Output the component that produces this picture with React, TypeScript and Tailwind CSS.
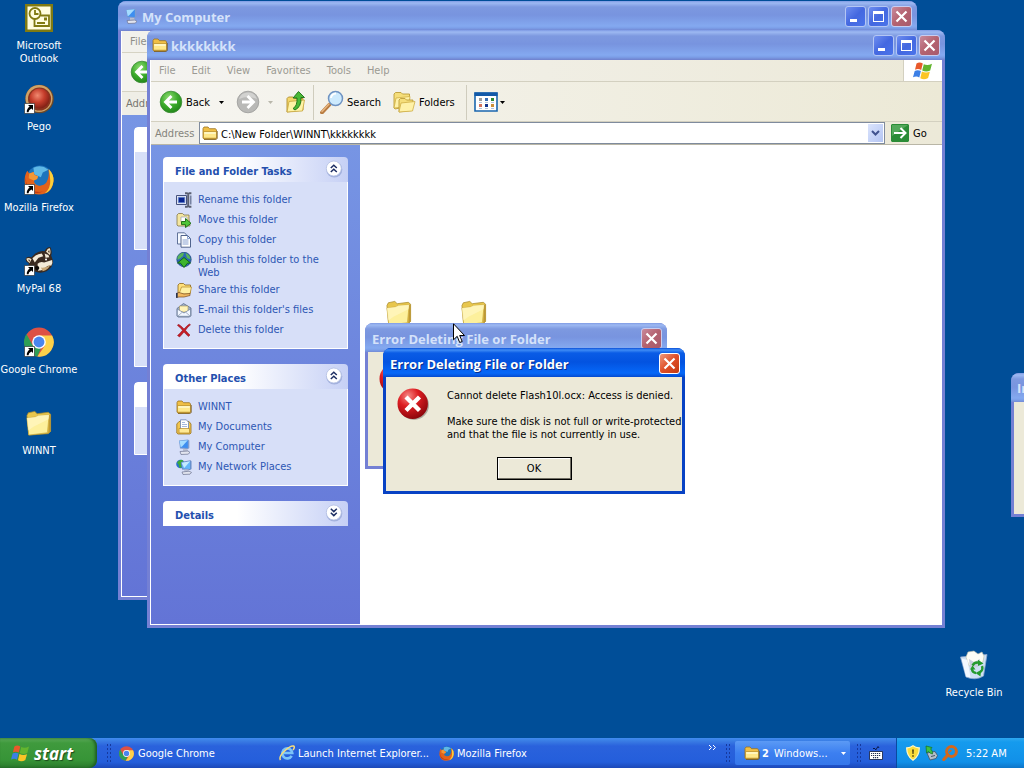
import type { ReactNode } from 'react'

/* ---------- Icons ---------- */

function FolderIcon({ className = 'size-4' }: { className?: string }) {
  return (
    <svg viewBox="0 0 16 16" className={className} aria-hidden="true">
      <path d="M1 13V3.500L2 2h4l1.500 1.700h6L14.500 5v8l-1 1.200H2z" fill="#f0bf45" stroke="#9a7220" strokeWidth=".8" />
      <path d="M1.500 13.200V6.500h13v6.700z" fill="#ffe88a" stroke="#b58a26" strokeWidth=".7" />
      <path d="M2.300 7.300h11.400v1.400H2.300z" fill="#fffbd5" />
      <path d="M2 14.300h12.500l.8-1V6" fill="none" stroke="#6d4c0c" strokeWidth=".7" />
    </svg>
  )
}

function BigFolderIcon({ className = 'size-[26px]' }: { className?: string }) {
  return (
    <svg viewBox="0 0 28 28" className={className} aria-hidden="true">
      <path d="M1 6l1.500-3 7-1.500L12 4l12-1.500 2.500 2V23L24 25.500 3 27z" fill="#e8c64c" stroke="#a88b2e" strokeWidth=".8" />
      <path d="M1 8.500l9-1L13.500 6 25 5l-2 19.500L3 27z" fill="#fdf09c" stroke="#c9a93c" strokeWidth=".7" />
      <path d="M10 7.500L13.500 6 25 5l-.8 5L8 18 2.500 22 1 8.500z" fill="#fff7c4" opacity=".7" />
      <path d="M25 5l1.500 0V23L24 25.500z" fill="#bd9835" />
    </svg>
  )
}

function ComputerIcon({ className = 'size-4' }: { className?: string }) {
  return (
    <svg viewBox="0 0 16 16" className={className} aria-hidden="true">
      <path d="M3 1.500L12 .6l1.300 1V9l-1.500 1.200L4 9.500z" fill="#7d9cd0" />
      <path d="M3.500 2l8.300-.7V9L4.600 8.500z" fill="#3d8ef0" />
      <path d="M3.500 2l8.300-.7-6 6.500-1.200.3z" fill="#a5dcff" />
      <path d="M7 9.800l4 .2 1.500 2.500-5.500.5z" fill="#b9bfd2" />
      <path d="M4 12.500l8-.5 2 1.500-2 1.700-7 .3z" fill="#e2e5ef" stroke="#6b7391" strokeWidth=".7" />
    </svg>
  )
}

function NetworkIcon() {
  return (
    <svg viewBox="0 0 16 16" className="size-4" aria-hidden="true">
      <circle cx="4.500" cy="5" r="4.300" fill="#2b6fd0" />
      <path d="M1 3.500Q4.500-1 7.500 2L5 5 6 8 3.500 9 2.500 5.500z" fill="#3cab3a" />
      <path d="M5 3L14.500 1.200l1 1V10l-1.500 1-8-.5z" fill="#6788c4" />
      <path d="M5.700 3.700l8.500-1.500V10L6.700 9.500z" fill="#63b6fa" />
      <path d="M5.700 3.700l8.500-1.500-6 6.800z" fill="#c3ebff" />
      <path d="M8.500 10.500h4l.5 2H8z" fill="#b9bfd2" />
      <path d="M6 13l7-.8 2.500 1.200-1.500 1.800-7 .3z" fill="#e2e5ef" stroke="#6b7391" strokeWidth=".7" />
    </svg>
  )
}

function DocumentsIcon() {
  return (
    <svg viewBox="0 0 16 16" className="size-4" aria-hidden="true">
      <path d="M.8 14V5L3 2.500h10L15 5v9l-1 1H2z" fill="#f2c650" stroke="#96701b" strokeWidth=".8" />
      <path d="M4.500.8h5.800l2.200 2.400V11h-8z" fill="#fff" stroke="#6881b4" strokeWidth=".8" />
      <path d="M6 3.500h3M6 5.500h5M6 7.500h5" stroke="#8ba6d6" strokeWidth=".8" />
      <path d="M3 9.500h10.500V14H3z" fill="#ffe994" stroke="#b38725" strokeWidth=".7" />
    </svg>
  )
}

function RenameIcon() {
  return (
    <svg viewBox="0 0 16 16" className="size-4" aria-hidden="true">
      <path d="M.5 3.500h10v9H.5z" fill="#e6e9f5" stroke="#46527e" strokeWidth="1" />
      <path d="M2.300 5.300h6.500v5.400H2.300z" fill="#0a2590" stroke="#6f92da" strokeWidth=".7" />
      <path d="M9 1.200h2L12.200 2l1.200-.8h2M12.200 2v12M9 14.800h2l1.200-.8 1.200.8h2" fill="none" stroke="#5a5f70" strokeWidth="2" />
      <path d="M14.700 3.500v9" stroke="#7681a0" strokeWidth="1.600" />
    </svg>
  )
}

function MoveIcon() {
  return (
    <svg viewBox="0 0 16 16" className="size-4" aria-hidden="true">
      <path d="M1 13V3l1.500-1.500h4L8 3h5v4l1 7H2z" fill="#f4e6a0" stroke="#837648" strokeWidth=".8" />
      <path d="M5 5h6v5H5z" fill="#fff" stroke="#8b93a8" strokeWidth=".6" />
      <path d="M5.500 9.500h4V6.500l5.500 4.800-5.500 4.300v-3h-4z" fill="#4fc537" stroke="#18690f" strokeWidth=".9" />
    </svg>
  )
}

function CopyIcon() {
  return (
    <svg viewBox="0 0 16 16" className="size-4" aria-hidden="true">
      <path d="M1.500.8h7L11 3.500V12H1.500z" fill="#f4f8ff" stroke="#51658f" strokeWidth=".9" />
      <path d="M5 3.500h6.500L14.500 6.500v8.700H5z" fill="#fff" stroke="#3f5380" strokeWidth=".9" />
      <path d="M11.500 3.500v3h3M6.500 8h6M6.500 10h6M6.500 12h6" fill="none" stroke="#6a89c4" strokeWidth=".8" />
    </svg>
  )
}

function PublishIcon() {
  return (
    <svg viewBox="0 0 16 16" className="size-4" aria-hidden="true">
      <circle cx="8" cy="7.500" r="7.200" fill="#2a68b4" stroke="#173f78" strokeWidth=".7" />
      <path d="M1.500 5Q4 .8 8 .8L7 4 4 6.500 1.500 8zM9.500 1Q14 2.500 14.800 7.500L11 6z" fill="#58b55a" />
      <path d="M8 5.500l6.500 5.500-3 .2L8 15.500 4.500 11.200 1.500 11z" fill="#3fb52d" stroke="#0f6011" strokeWidth=".9" />
    </svg>
  )
}

function ShareIcon() {
  return (
    <svg viewBox="0 0 16 16" className="size-4" aria-hidden="true">
      <path d="M2 11V3l1.500-1.500h4L9 3h5.500v8z" fill="#ffe07b" stroke="#8b6518" strokeWidth=".8" />
      <path d="M3 12l2.500-7H15.500L14 12z" fill="#fff0a2" stroke="#b28728" strokeWidth=".7" />
      <path d="M0 11.500l3-1 5 1.500 6-.5v2l-6 1.500H3L0 15.500z" fill="#f1b860" stroke="#7a4a20" strokeWidth=".7" />
      <path d="M0 11h1.700v4.800H0z" fill="#27314f" />
    </svg>
  )
}

function MailIcon() {
  return (
    <svg viewBox="0 0 16 16" className="size-4" aria-hidden="true">
      <path d="M1 6.500L7.500 1.500 15 6v7.500L13.500 15H2L1 14z" fill="#9fb0c9" stroke="#5c6b86" strokeWidth=".8" />
      <path d="M3.500 4h8.500v6h-8.500z" fill="#fff3b8" stroke="#a4945c" strokeWidth=".6" />
      <path d="M1.300 7L8 11l6.500-4v7.300H1.300z" fill="#f2f7ff" stroke="#6f7f9c" strokeWidth=".7" />
      <path d="M1.500 14.300L6.500 10M14.300 14.300L9.500 10" stroke="#8795b0" strokeWidth=".7" />
    </svg>
  )
}

function DeleteIcon() {
  return (
    <svg viewBox="0 0 16 16" className="size-4" aria-hidden="true">
      <path d="M2 2.500Q3.500 2 8 7q4-4.500 5.500-5l1 .8Q11 5.500 9.500 8.300q2.500 3.200 4.500 4.700l-1.500 1.500Q10 12.500 8 10q-2 2.500-4.500 5L1.500 13.500Q4.500 11 6.500 8.300 4 5 1.500 3.500z" fill="#c51d26" stroke="#8b0d18" strokeWidth=".5" />
    </svg>
  )
}

function FlagIcon({ className }: { className: string }) {
  return (
    <svg viewBox="0 0 20 18" className={className} aria-hidden="true">
      <path d="M3.500 1.500Q6.500-.5 9.800 1.500L8.200 8Q5 6.200 2 7.800z" fill="#e8592b" />
      <path d="M10.800 2.200Q14.500 4 19 1.700L17.200 8.500Q13.300 10.300 9.200 8.500z" fill="#63b52f" />
      <path d="M1.700 8.900Q5 7.300 7.900 9.100L6.300 15.500Q3.500 13.700 0 15.300z" fill="#3c80e6" />
      <path d="M8.900 9.600Q13 11.400 16.900 9.700L15.100 16Q11 18.400 7.300 16.200z" fill="#fbc526" />
    </svg>
  )
}

function BackIcon() {
  return (
    <svg viewBox="0 0 24 24" className="size-6 shrink-0" aria-hidden="true">
      <defs>
        <radialGradient id="backFill" cx=".4" cy=".3" r=".8">
          <stop offset="0" stopColor="#8fdc72" />
          <stop offset=".5" stopColor="#3cab2c" />
          <stop offset="1" stopColor="#1c7d16" />
        </radialGradient>
      </defs>
      <circle cx="12" cy="12" r="10.800" fill="url(#backFill)" stroke="#3b8a35" strokeWidth=".8" />
      <path d="M12.500 6L6.500 12l6 6M7 12h11" fill="none" stroke="#fff" strokeWidth="2.800" />
    </svg>
  )
}

function ForwardIcon() {
  return (
    <svg viewBox="0 0 24 24" className="size-6 shrink-0" aria-hidden="true">
      <circle cx="12" cy="12" r="10.800" fill="#b9b9b7" stroke="#9c9c9a" strokeWidth=".8" />
      <path d="M3 9a9.500 9.500 0 0 1 18 0Q12 5 3 9z" fill="#d2d2d0" />
      <path d="M11.500 6l6 6-6 6M17 12H6" fill="none" stroke="#fff" strokeWidth="2.800" />
    </svg>
  )
}

function UpIcon() {
  return (
    <svg viewBox="0 0 22 24" className="h-6 w-[22px]" aria-hidden="true">
      <path d="M2 22V8.500L3.500 7H8l1.500 1.500H18V20z" fill="#f5d76b" stroke="#b08e2d" strokeWidth=".9" />
      <path d="M2 22L4 11.500 19.500 10 17.500 21z" fill="#fff3a6" stroke="#c6a53d" strokeWidth=".8" />
      <path d="M8 18.500Q12.500 16 12 8H8L13.500 1.500 19.500 7.500H16Q16.500 17 10 20z" fill="#4ab936" stroke="#1b6e14" strokeWidth=".9" />
    </svg>
  )
}

function SearchIcon() {
  return (
    <svg viewBox="0 0 24 24" className="size-6" aria-hidden="true">
      <path d="M2 22.500l7.500-8" stroke="#b87c42" strokeWidth="3.800" strokeLinecap="round" />
      <path d="M2 21.500l7-7.500" stroke="#e8b680" strokeWidth="1.400" strokeLinecap="round" />
      <circle cx="15.500" cy="8.500" r="7" fill="#cdeafd" stroke="#6f93c2" strokeWidth="1.500" />
      <path d="M11 8a5 5 0 0 1 5-4.500" fill="none" stroke="#fff" strokeWidth="2" />
    </svg>
  )
}

function FoldersIcon() {
  return (
    <svg viewBox="0 0 24 24" className="size-6" aria-hidden="true">
      <path d="M2 18V4l1.500-1.500H9L10.500 4h7v12L3 19z" fill="#f5de7a" stroke="#bb9c38" strokeWidth=".9" />
      <path d="M2 18L4 8l14-1.500-1 10z" fill="#fff2a8" stroke="#cfae45" strokeWidth=".8" />
      <path d="M7 22V10l1.500-1.500h4.500L14.500 10H21l-1.500 10.500z" fill="#f5de7a" stroke="#bb9c38" strokeWidth=".9" />
      <path d="M7 22l2-9 14-1.500L20.500 21z" fill="#fff2a8" stroke="#cfae45" strokeWidth=".8" />
    </svg>
  )
}

function ViewsIcon() {
  return (
    <svg viewBox="0 0 24 20" className="h-5 w-6" aria-hidden="true">
      <path d="M1 1h22v18H1z" fill="#fff" stroke="#1a66ae" strokeWidth="1.600" />
      <path d="M.5.500h23v3.500H.500z" fill="#1259a8" />
      <path d="M5 6h3v3H5z" fill="#9c9c9c" />
      <path d="M11 6h3v3h-3z" fill="#3a6fb4" />
      <path d="M17 6h3v3h-3z" fill="#2e8834" />
      <path d="M5 12h3v3H5z" fill="#d3725c" />
      <path d="M11 12h3v3h-3z" fill="#14358e" />
      <path d="M17 12h3v3h-3z" fill="#cd9038" />
      <path d="M5 10.500h3M11 10.500h3M17 10.500h3M5 16.500h3M11 16.500h3M17 16.500h3" stroke="#9fb4d4" strokeWidth=".8" />
    </svg>
  )
}

function Caret({ className = 'fill-black' }: { className?: string }) {
  return (
    <svg viewBox="0 0 5 3" className={`h-[3px] w-[5px] ${className}`} aria-hidden="true">
      <path d="M0 0h5L2.500 3z" />
    </svg>
  )
}

function ErrorIcon() {
  return (
    <svg viewBox="0 0 32 32" className="size-8 shrink-0" aria-hidden="true">
      <defs>
        <radialGradient id="errorFill" cx=".35" cy=".25" r=".85">
          <stop offset="0" stopColor="#f58a86" />
          <stop offset=".4" stopColor="#dd1d22" />
          <stop offset="1" stopColor="#7f0207" />
        </radialGradient>
      </defs>
      <circle cx="17" cy="17" r="15" fill="#00000044" />
      <circle cx="15.700" cy="15.700" r="15.200" fill="url(#errorFill)" />
      <path d="M9 9l13.500 13.500M22.500 9L9 22.500" stroke="#fff" strokeWidth="4.400" />
    </svg>
  )
}

function ChromeIcon({ className }: { className: string }) {
  return (
    <svg viewBox="0 0 32 32" className={className} aria-hidden="true">
      <circle cx="16" cy="16" r="15.500" fill="#dd5144" />
      <path d="M2.600 7.400L9.400 19.600 18 23l-3.700 8.500A15.500 15.500 0 0 1 2.600 7.400z" fill="#2f9e55" />
      <path d="M30 9H16l6.500 10.500L14.300 31.500A15.500 15.500 0 0 0 30 9z" fill="#fcd14a" />
      <circle cx="16" cy="16" r="7.300" fill="#fff" />
      <circle cx="16" cy="16" r="5.800" fill="#4a85ee" />
    </svg>
  )
}

function FirefoxIcon({ className }: { className: string }) {
  return (
    <svg viewBox="0 0 32 32" className={className} aria-hidden="true">
      <circle cx="17" cy="14.500" r="14" fill="#1d74bd" />
      <path d="M10 3Q18-1 26 5L20 8l-2 5-7-3z" fill="#5fb8e6" />
      <path d="M26 4.500Q32 10 31.500 17 30 31 16 31.500 3 31 .8 19 0 11 3.500 6L5.500 9l5-1.500Q10 10 12 11l3 1-1 3-3.500 1.500Q11 21 16 22q5 .5 8-3.500 3.500-6 2-14z" fill="#e2621b" />
      <path d="M26.500 4.500Q32 10 31.500 17 30.500 27 22 30.500q6.500-6 6-13.500-.2-6-1.500-12.500z" fill="#fbd03a" />
      <path d="M2 12q-1 9 6 14 6 4 13 2-9 4.500-16-2Q.5 20 2 12z" fill="#c23a13" />
      <path d="M5.500 9L10.500 7.500Q10 10 12 11l3 1-1 3-3.500 1.500L5 14z" fill="#f39735" />
    </svg>
  )
}

function RaccoonIcon() {
  return (
    <svg viewBox="0 0 32 32" className="size-[30px]" aria-hidden="true">
      <path d="M1.500 14Q3 10.500 8 12l4-4q5-3.500 10-2.500Q24 1 28 1q2.500 4 1 9l2 6q0 7-7 11-7 3-13 0-7-3-6-9-3-1-3.500-4z" fill="#3a2a20" />
      <path d="M2.500 13.500Q5 12 8 14l-2 4q-3-1-3.500-4.500zM23.500 6Q25.500 2 27.500 2.500q1.500 3.500 0 7z" fill="#f1e3c6" />
      <path d="M4.500 14.500q1.500-.5 2 .8L5.500 17zM25.500 6q.8-1.500 1.500-1.500.5 1.500 0 3z" fill="#5a4233" />
      <path d="M9 13q5-5 10-5l1.500 3-5 1.500-4 5zM22 8l4 1.500 1 2.500-4 .5z" fill="#f3ead8" />
      <path d="M14.500 19q3-3 7-1.500l8.500-2.500q1 3-1 6-4-.5-6 2-3 3.500-8 3.500z" fill="#f3ead8" />
      <path d="M18 23q5 1 10-3-1.500 5-8 7z" fill="#c9a877" />
      <circle cx="23.500" cy="14.500" r="1.100" fill="#fff" />
      <circle cx="14" cy="23.500" r="2.300" fill="#0d0907" />
    </svg>
  )
}

function PegoIcon() {
  return (
    <svg viewBox="0 0 30 30" className="size-[30px]" aria-hidden="true">
      <defs>
        <radialGradient id="pegoFill" cx=".4" cy=".35" r=".7">
          <stop offset="0" stopColor="#f08a70" />
          <stop offset=".5" stopColor="#c63e2c" />
          <stop offset="1" stopColor="#7a1c12" />
        </radialGradient>
      </defs>
      <circle cx="15.500" cy="15" r="14.300" fill="#6d4828" />
      <circle cx="15" cy="14.500" r="13.500" fill="#d0a368" />
      <circle cx="15.500" cy="15" r="11.500" fill="#8a351f" />
      <circle cx="15.500" cy="14.500" r="10" fill="url(#pegoFill)" />
    </svg>
  )
}

function OutlookIcon() {
  return (
    <svg viewBox="0 0 28 28" className="size-7" aria-hidden="true">
      <path d="M0 0h28v28H0z" fill="#807a12" />
      <path d="M2.500 2.500h23v23h-23z" fill="#fffde0" />
      <g fill="none" stroke="#807a12" strokeWidth="1.800">
        <path d="M9.500 14v8h14.500V11.500H16" />
        <circle cx="10" cy="9.500" r="5.500" fill="#fffde0" />
        <path d="M10 6v4h3.500M12 19h8" />
      </g>
      <path d="M19 13.500h3v3h-3z" fill="#807a12" />
    </svg>
  )
}

function RecycleIcon() {
  return (
    <svg viewBox="0 0 30 30" className="size-[30px]" aria-hidden="true">
      <path d="M1.500 7L28 4.500 24.500 26q-8 5-17.500 1z" fill="#cfe0f3" stroke="#8fa9cf" strokeWidth=".8" />
      <path d="M7 7l2-5 6-1 4 3 4-2 2 4-1 6-14 4z" fill="#fdfdf6" stroke="#b8bda9" strokeWidth=".6" />
      <path d="M10 9l5 3 6-3-2 8-8 1z" fill="#c7cede" />
      <path d="M2.500 8.500l6 1.500 3 17.500-4.500-1z" fill="#f2f8ff" />
      <g fill="none" stroke="#259a2d" strokeWidth="2.400">
        <path d="M13.500 15.500q2.500-4 7-2.500M23 16q1.500 4.500-2.500 6.500M17 23q-4-.5-4-4.500" />
      </g>
      <path d="M19 9.800l5.500 3.700-5.500 2.500zM22 20l-5.500 3 5 3.500zM11 19.500l2.500-4 3 4z" fill="#259a2d" />
    </svg>
  )
}

function IeIcon() {
  return (
    <svg viewBox="0 0 16 16" className="size-4" aria-hidden="true">
      <path d="M12.700 10.800A5 5 0 1 1 13.300 8H4.500" fill="none" stroke="#7cc4f8" strokeWidth="2.600" />
      <path d="M1.500 15Q-.5 12 5 6.500 11.500.3 14.500 1q1.800 1-.5 4" fill="none" stroke="#f5dc7c" strokeWidth="1.500" />
    </svg>
  )
}

function ShortcutArrow() {
  return (
    <svg viewBox="0 0 11 11" className="absolute bottom-0 left-0 size-[11px]" aria-hidden="true">
      <path d="M.5.500h10v10H.500z" fill="#fff" stroke="#222" strokeWidth=".6" />
      <path d="M4 2h5v5L7.400 5.400Q4.500 7 4.500 9.300H2.800Q2.500 6 5.600 3.600z" fill="#000" />
    </svg>
  )
}

function KeyboardIcon() {
  return (
    <svg viewBox="0 0 14 14" className="size-[14px]" aria-hidden="true">
      <path d="M4 3q1-2 2 0t2-1 2 0" fill="none" stroke="#0a1b4c" strokeWidth="1" />
      <path d="M.5 5.500h13v8H.500z" fill="#fff" stroke="#101a3a" strokeWidth=".8" />
      <path d="M2 7.500h10M2 9.500h10M4 11.700h6" stroke="#23304f" strokeWidth="1.200" strokeDasharray="1.200 .8" />
    </svg>
  )
}

function ShieldIcon() {
  return (
    <svg viewBox="0 0 14 16" className="h-4 w-[14px]" aria-hidden="true">
      <path d="M7 .8Q10 3 13.300 2.800 13.500 11 7 15.300.5 11 .7 2.800 4 3 7 .8z" fill="#fbdc3a" stroke="#fff6c4" strokeWidth="1.200" />
      <path d="M6.200 4.500h1.600L7.500 9h-1zM6.300 10.200h1.400v1.500H6.300z" fill="#3a3108" />
    </svg>
  )
}

function DeviceIcon() {
  return (
    <svg viewBox="0 0 14 16" className="h-4 w-[14px]" aria-hidden="true">
      <path d="M3 8l8-1.500 2.500 4-1.500 3-6 1.500z" fill="#b5c0c8" stroke="#455364" strokeWidth=".8" />
      <path d="M7 11.500l4-1" stroke="#455364" strokeWidth="1" />
      <path d="M2 1l6 1.500-1.300 1.500Q9 6 8.500 9 6 8.500 4.500 6.500L2.500 8z" fill="#3fc143" stroke="#147020" strokeWidth=".7" />
    </svg>
  )
}

function TrayRingIcon() {
  return (
    <svg viewBox="0 0 16 16" className="size-4" aria-hidden="true">
      <circle cx="9.500" cy="6.500" r="4.900" fill="none" stroke="#d4681c" strokeWidth="3" />
      <path d="M1.800 14.500l4-4.500" stroke="#d4681c" strokeWidth="3.200" strokeLinecap="round" />
      <path d="M7 7.500l2.500-2.500" stroke="#d4681c" strokeWidth="1.500" />
    </svg>
  )
}

function Chevrons({ down = false }: { down?: boolean }) {
  return (
    <svg viewBox="0 0 18 18" className="mb-[2px] size-[18px]" aria-hidden="true">
      <circle cx="9.300" cy="9.500" r="8" fill="#7f91c9" opacity=".55" />
      <circle cx="8.800" cy="8.500" r="7.500" fill="#fff" stroke="#b3bfe2" strokeWidth=".8" />
      <path
        d={down ? 'M5.800 4.800l3 2.800 3-2.800M5.800 8.800l3 2.800 3-2.800' : 'M5.800 8l3-2.800L11.800 8M5.800 12l3-2.800 3 2.800'}
        fill="none"
        stroke="#1c2d62"
        strokeWidth="1.500"
      />
    </svg>
  )
}

/* ---------- Window parts ---------- */

const titleInactive =
  'bg-[linear-gradient(#7e9ae4_0px,#9db9f2_2px,#7d99e0_6px,#7894df_14px,#84a9f0_25px,#7c9fe8_27px,#6f80cc_30px)]'
const titleActive =
  'bg-[linear-gradient(#0a4fd8_0px,#3f8cf5_2px,#0a5ce6_5px,#0353e0_14px,#0668f8_25px,#055be6_27px,#0440c0_30px)]'
const titleFont = "pt-[2px] font-['Open_Sans','Noto_Sans',sans-serif] text-[13px] font-bold"

function CloseButton({ active = false }: { active?: boolean }) {
  return (
    <button
      type="button"
      aria-label="Close"
      className={`flex size-[21px] items-center justify-center rounded-[3px] border ${
        active ? 'border-white bg-[linear-gradient(135deg,#f0997c,#df4f28_50%,#c33a12)]' : 'border-[#c8cdf0] bg-[linear-gradient(135deg,#c98a9c,#b4626f_50%,#a85a6c)]'
      }`}
    >
      <svg viewBox="0 0 13 13" className="size-[13px]" aria-hidden="true">
        <path d="M1.500 1.500l10 10M11.500 1.500l-10 10" stroke="#fff" strokeWidth="2.200" />
      </svg>
    </button>
  )
}

function WindowButtons() {
  const btn =
    'flex size-[21px] rounded-[3px] border border-[#b4c6f4] bg-[linear-gradient(135deg,#6f8ff0,#4468e0_50%,#4a74ea)]'
  return (
    <div className="flex gap-[2px]">
      <button type="button" aria-label="Minimize" className={`${btn} items-end p-1`}>
        <span className="h-[3px] w-[7px] bg-white" />
      </button>
      <button type="button" aria-label="Maximize" className={`${btn} items-center justify-center`}>
        <span className="h-[11px] w-[11px] border border-t-3 border-white" />
      </button>
      <CloseButton />
    </div>
  )
}

interface ExplorerProps {
  title: string
  icon: ReactNode
  className: string
  children: ReactNode
}

function ExplorerFrame({ title, icon, className, children }: ExplorerProps) {
  return (
    <section className={`absolute flex flex-col overflow-hidden rounded-t-lg bg-[#7480d4] ${className}`}>
      <header className={`flex h-[30px] shrink-0 items-center gap-[3px] px-[5px] ${titleInactive}`}>
        {icon}
        <h2 className={`flex-1 text-[#d5e2fa] ${titleFont}`}>{title}</h2>
        <WindowButtons />
      </header>
      <div className="mx-[3px] mb-[3px] flex flex-1 flex-col border-b border-l border-white bg-[#efede0]">{children}</div>
    </section>
  )
}

interface Task {
  label: string
  icon: ReactNode
}

const folderTasks: Task[] = [
  { label: 'Rename this folder', icon: <RenameIcon /> },
  { label: 'Move this folder', icon: <MoveIcon /> },
  { label: 'Copy this folder', icon: <CopyIcon /> },
  { label: 'Publish this folder to the Web', icon: <PublishIcon /> },
  { label: 'Share this folder', icon: <ShareIcon /> },
  { label: "E-mail this folder's files", icon: <MailIcon /> },
  { label: 'Delete this folder', icon: <DeleteIcon /> },
]

const otherPlaces: Task[] = [
  { label: 'WINNT', icon: <FolderIcon /> },
  { label: 'My Documents', icon: <DocumentsIcon /> },
  { label: 'My Computer', icon: <ComputerIcon /> },
  { label: 'My Network Places', icon: <NetworkIcon /> },
]

function TaskPanel({ title, tasks }: { title: string; tasks?: Task[] }) {
  return (
    <section>
      <button
        type="button"
        className="flex h-[25px] w-full items-center justify-between rounded-t-[4px] bg-linear-to-r from-white from-40% to-[#c6d0f5] pr-[5px] pl-3 text-left font-bold text-[#2450ae]"
      >
        <span className="pt-[3px]">{title}</span>
        <Chevrons down={!tasks} />
      </button>
      {tasks && (
        <ul className="flex flex-col gap-1 border border-t-0 border-white bg-[#d7dff8] py-[10px] pr-6 pl-3">
          {tasks.map((task) => (
            <li key={task.label}>
              <a href="#" className="flex min-h-4 items-start gap-[6px] text-[#2d57b4]">
                <span className="shrink-0">{task.icon}</span>
                <span className="-mb-px pt-px">{task.label}</span>
              </a>
            </li>
          ))}
        </ul>
      )}
    </section>
  )
}

const sideFill = 'bg-linear-to-b from-[#7795e4] to-[#6374d6]'

function BackWindow() {
  return (
    <ExplorerFrame title="My Computer" icon={<ComputerIcon />} className="top-px right-[107px] bottom-[138px] left-[118px]">
      <div className="flex h-[22px] items-center border-b border-[#d6d3c4] bg-[#f2f1ec] px-2 text-[#8f8e88]">File</div>
      <div className="flex h-[39px] items-center border-b border-[#d6d3c4] bg-[#f4f3ee] px-2">
        <BackIcon />
      </div>
      <div className="flex h-[23px] items-center bg-[#efeee6] px-1 text-[#77766f]">Address</div>
      <div className={`flex flex-1 flex-col gap-[15px] px-3 pt-3 ${sideFill}`}>
        <div className="h-[123px] w-[185px] rounded-t-[4px] border border-white bg-[#d7dff8]">
          <div className="h-6 bg-white" />
        </div>
        <div className="h-[102px] w-[185px] rounded-t-[4px] border border-white bg-[#d7dff8]">
          <div className="h-6 bg-white" />
        </div>
        <div className="h-[73px] w-[185px] rounded-t-[4px] border border-white bg-[#d7dff8]">
          <div className="h-6 bg-white" />
        </div>
      </div>
    </ExplorerFrame>
  )
}

function FolderWindow() {
  return (
    <ExplorerFrame
      title="kkkkkkkk"
      icon={<FolderIcon />}
      className="top-[30px] right-[79px] bottom-[110px] left-[147px]"
    >
      {/* Menu bar */}
      <div className="flex h-[22px] items-stretch justify-between border-b border-[#d3d0c0] bg-linear-to-r from-[#f4f3f0] to-[#ece9d8]">
        <nav className="flex items-center gap-4 pl-2 text-[#9b9a93]">
          {['File', 'Edit', 'View', 'Favorites', 'Tools', 'Help'].map((item) => (
            <button type="button" key={item}>
              {item}
            </button>
          ))}
        </nav>
        <div className="flex w-[39px] items-center justify-center border-l border-[#d3d0c0] bg-white">
          <FlagIcon className="h-[18px] w-5" />
        </div>
      </div>

      {/* Toolbar */}
      <div className="flex h-[40px] items-center border-b border-[#d3d0c0] bg-linear-to-r from-[#f6f5f1] to-[#ece9d6] pt-px pl-2">
        <button type="button" className="flex w-[65px] items-center gap-[3px]">
          <BackIcon />
          Back
          <span className="ml-auto">
            <Caret />
          </span>
        </button>
        <button type="button" aria-label="Forward" className="ml-3 flex items-center gap-2">
          <ForwardIcon />
          <Caret className="fill-[#b9b7ab]" />
        </button>
        <button type="button" aria-label="Up" className="ml-3">
          <UpIcon />
        </button>
        <span className="mx-[6px] h-[35px] w-px bg-[#cfccbd]" />
        <button type="button" className="flex w-[72px] items-center gap-[3px]">
          <SearchIcon />
          Search
        </button>
        <button type="button" className="flex w-[66px] items-center gap-[3px]">
          <FoldersIcon />
          Folders
        </button>
        <span className="mr-[7px] ml-2 h-[35px] w-px bg-[#cfccbd]" />
        <button type="button" aria-label="Views" className="flex items-center gap-[2px]">
          <ViewsIcon />
          <Caret />
        </button>
      </div>

      {/* Address bar */}
      <div className="flex h-[23px] items-center border-b border-[#b9b6a6] bg-linear-to-r from-[#f0efe9] to-[#ece9d8]">
        <label htmlFor="address" className="w-12 shrink-0 pt-px pl-1 text-[#85847c]">
          Address
        </label>
        <div className="flex h-[22px] flex-1 items-center gap-[3px] border border-[#7f8b9d] bg-white pr-px pl-[2px]">
          <FolderIcon />
          <input id="address" defaultValue="C:\New Folder\WINNT\kkkkkkkk" className="min-w-0 flex-1 pt-[2px] outline-none" />
          <button
            type="button"
            aria-label="Show addresses"
            className="flex h-[18px] w-[15px] items-center justify-center bg-linear-to-br from-[#dbe4fc] to-[#b4c5f3]"
          >
            <svg viewBox="0 0 9 6" className="h-[6px] w-[9px]" aria-hidden="true">
              <path d="M1 1l3.500 3.500L8 1" fill="none" stroke="#41538f" strokeWidth="2" />
            </svg>
          </button>
        </div>
        <button type="button" className="ml-[6px] flex w-[51px] items-center gap-1">
          <svg viewBox="0 0 18 18" className="size-[18px]" aria-hidden="true">
            <path d="M0 1L1 0h16l1 1v16l-1 1H1l-1-1z" fill="#2a8c37" />
            <path d="M1 1h16L1 12z" fill="#6fba73" opacity=".6" />
            <path d="M9.500 4l5 5-5 5M14 9H3" fill="none" stroke="#fff" strokeWidth="2" />
          </svg>
          <span className="pt-px">Go</span>
        </button>
      </div>

      <div className="flex flex-1">
        <aside className={`flex w-[209px] shrink-0 flex-col gap-[15px] p-3 ${sideFill}`}>
          <TaskPanel title="File and Folder Tasks" tasks={folderTasks} />
          <TaskPanel title="Other Places" tasks={otherPlaces} />
          <TaskPanel title="Details" />
        </aside>
        <div className="flex flex-1 items-start gap-[49px] bg-white px-[26px] pt-[155px]">
          <BigFolderIcon />
          <BigFolderIcon />
        </div>
      </div>
    </ExplorerFrame>
  )
}

/* ---------- Dialogs ---------- */

function InactiveDialog() {
  return (
    <section className="absolute top-[323px] left-[365px] flex h-[146px] w-[302px] flex-col overflow-hidden rounded-t-lg bg-[#7480d4]">
      <header className={`flex h-[29px] shrink-0 items-center justify-between pt-px pr-[5px] pl-[7px] ${titleInactive}`}>
        <h2 className={`text-[#d5e2fa] ${titleFont}`}>Error Deleting File or Folder</h2>
        <CloseButton />
      </header>
      <div className="mx-[3px] mb-[3px] flex-1 bg-[#ece9d8] p-[11px]">
        <ErrorIcon />
      </div>
    </section>
  )
}

function ErrorDialog() {
  return (
    <section
      role="dialog"
      aria-labelledby="error-title"
      className="absolute top-[348px] left-[383px] flex w-[302px] flex-col overflow-hidden rounded-t-lg bg-[#0842c4]"
    >
      <header className={`flex h-[29px] shrink-0 items-center justify-between pt-px pr-[5px] pl-[7px] ${titleActive}`}>
        <h2 id="error-title" className={`text-white [text-shadow:1px_1px_0_#0a2f8c] ${titleFont}`}>
          Error Deleting File or Folder
        </h2>
        <CloseButton active />
      </header>
      <div className="mx-[3px] mb-[3px] flex flex-col items-center bg-[#ece9d8] py-[11px]">
        <div className="flex w-full gap-[18px] pl-[11px] whitespace-nowrap">
          <ErrorIcon />
          <div className="flex flex-col gap-[13px] pt-px">
            <p>Cannot delete Flash10l.ocx: Access is denied.</p>
            <p>
              Make sure the disk is not full or write-protected
              <br />
              and that the file is not currently in use.
            </p>
          </div>
        </div>
        <button
          type="button"
          className="mt-4 h-[23px] w-[75px] border border-black bg-[#ece9d8] shadow-[inset_-1px_-1px_0_#716f64,inset_1px_1px_0_#fff]"
        >
          OK
        </button>
      </div>
    </section>
  )
}

function EdgeWindow() {
  return (
    <section className="absolute top-[373px] -right-[290px] flex h-[144px] w-[303px] flex-col overflow-hidden rounded-t-lg bg-[#7480d4]">
      <header className={`flex h-[29px] shrink-0 items-center pl-[6px] ${titleInactive}`}>
        <h2 className={`text-[#d5e2fa] ${titleFont}`}>In</h2>
      </header>
      <div className="mx-[3px] mb-[3px] flex-1 bg-[#ece9d8]" />
    </section>
  )
}

/* ---------- Desktop ---------- */

interface Shortcut {
  label: string
  icon: ReactNode
  linked: boolean
}

const shortcuts: Shortcut[] = [
  { label: 'Microsoft Outlook', icon: <OutlookIcon />, linked: false },
  { label: 'Pego', icon: <PegoIcon />, linked: true },
  { label: 'Mozilla Firefox', icon: <FirefoxIcon className="size-[30px]" />, linked: true },
  { label: 'MyPal 68', icon: <RaccoonIcon />, linked: true },
  { label: 'Google Chrome', icon: <ChromeIcon className="size-[30px]" />, linked: true },
  { label: 'WINNT', icon: <BigFolderIcon />, linked: false },
]

function DesktopIcon({ label, icon, linked }: Shortcut) {
  return (
    <a href="#" className="flex h-[81px] w-[78px] flex-col items-center gap-[6px] text-center text-white">
      <span className="relative flex size-[30px] items-center justify-center">
        {icon}
        {linked && <ShortcutArrow />}
      </span>
      <span>{label}</span>
    </a>
  )
}

function Grip() {
  return <span className="h-5 w-[5px] bg-[radial-gradient(circle,#16399e_1px,transparent_1px)] bg-size-[3px_4px]" />
}

function Taskbar() {
  return (
    <footer className="flex h-[30px] shrink-0 items-stretch bg-[linear-gradient(#3f8cf0_0px,#3a7de4_3px,#2a62dc_8px,#245edb_24px,#1c48b8_30px)] text-white">
      <button
        type="button"
        className="flex w-[97px] items-center gap-1 rounded-r-lg bg-[linear-gradient(#5eac5c_0px,#3f9a3d_5px,#379437_22px,#2a7a2c_30px)] pl-[11px] shadow-[inset_-2px_0_3px_#1d5c22]"
      >
        <FlagIcon className="h-[17px] w-[19px]" />
        <span className="font-['Open_Sans','Noto_Sans',sans-serif] text-[17px] leading-none font-bold italic [text-shadow:1px_1px_1px_#1b4a1c]">
          start
        </span>
      </button>

      {/* Quick launch */}
      <div className="flex flex-1 items-center pl-[9px]">
        <Grip />
        <a href="#" className="ml-2 flex w-40 items-center gap-1">
          <ChromeIcon className="size-[15px]" />
          Google Chrome
        </a>
        <a href="#" className="flex w-40 items-center gap-[3px] whitespace-nowrap">
          <IeIcon />
          Launch Internet Explorer...
        </a>
        <a href="#" className="flex items-center gap-[3px]">
          <FirefoxIcon className="size-[15px]" />
          Mozilla Firefox
        </a>
        <button type="button" aria-label="More" className="mr-2 mb-3 ml-auto">
          <svg viewBox="0 0 9 7" className="h-[7px] w-[9px]" aria-hidden="true">
            <path d="M1 1l2.500 2.500L1 6M5 1l2.500 2.500L5 6" fill="none" stroke="#fff" strokeWidth="1" />
          </svg>
        </button>
        <Grip />
      </div>

      {/* Open windows */}
      <div className="flex w-[166px] items-center pl-[5px]">
        <button
          type="button"
          className="flex h-6 w-[115px] items-center gap-[2px] rounded-[2px] bg-linear-to-b from-[#5b9af5] via-[#3c7ff0] to-[#3577ea] pr-1 pl-[9px] whitespace-nowrap"
        >
          <FolderIcon />
          <b>2</b>&nbsp;Windows...
          <span className="ml-auto">
            <Caret className="fill-white" />
          </span>
        </button>
        <span className="ml-[6px] flex items-center gap-2">
          <Grip />
          <KeyboardIcon />
        </span>
      </div>

      <div className="flex w-[128px] items-center gap-1 border-l border-[#0a4aa0] bg-[linear-gradient(#2ea8f0_0px,#159bee_4px,#1190e8_24px,#0d75c8_30px)] pl-[9px]">
        <ShieldIcon />
        <DeviceIcon />
        <TrayRingIcon />
        <span className="ml-1">5:22 AM</span>
      </div>
    </footer>
  )
}

export default function App() {
  return (
    <div className="flex min-h-screen flex-col bg-[#004e98] font-['DejaVu_Sans_Condensed','DejaVu_Sans',sans-serif] text-[11px] leading-[13px] text-black">
      <main className="relative flex-1 overflow-hidden">
        <nav className="flex w-[78px] flex-col pt-[3px]">
          {shortcuts.map((item) => (
            <DesktopIcon key={item.label} {...item} />
          ))}
        </nav>

        <div className="absolute right-[11px] bottom-[7px]">
          <DesktopIcon label="Recycle Bin" icon={<RecycleIcon />} linked={false} />
        </div>

        <BackWindow />
        <FolderWindow />
        <EdgeWindow />
        <InactiveDialog />
        <ErrorDialog />

        {/* Mouse pointer */}
        <svg viewBox="0 0 12 21" className="absolute top-[323px] left-[453px] h-[21px] w-3" aria-hidden="true">
          <path d="M.5.800v16l3.700-3.500 2.500 6.200 2.500-1L6.700 12.500h4.800z" fill="#fff" stroke="#000" strokeWidth="1" />
        </svg>
      </main>
      <Taskbar />
    </div>
  )
}
